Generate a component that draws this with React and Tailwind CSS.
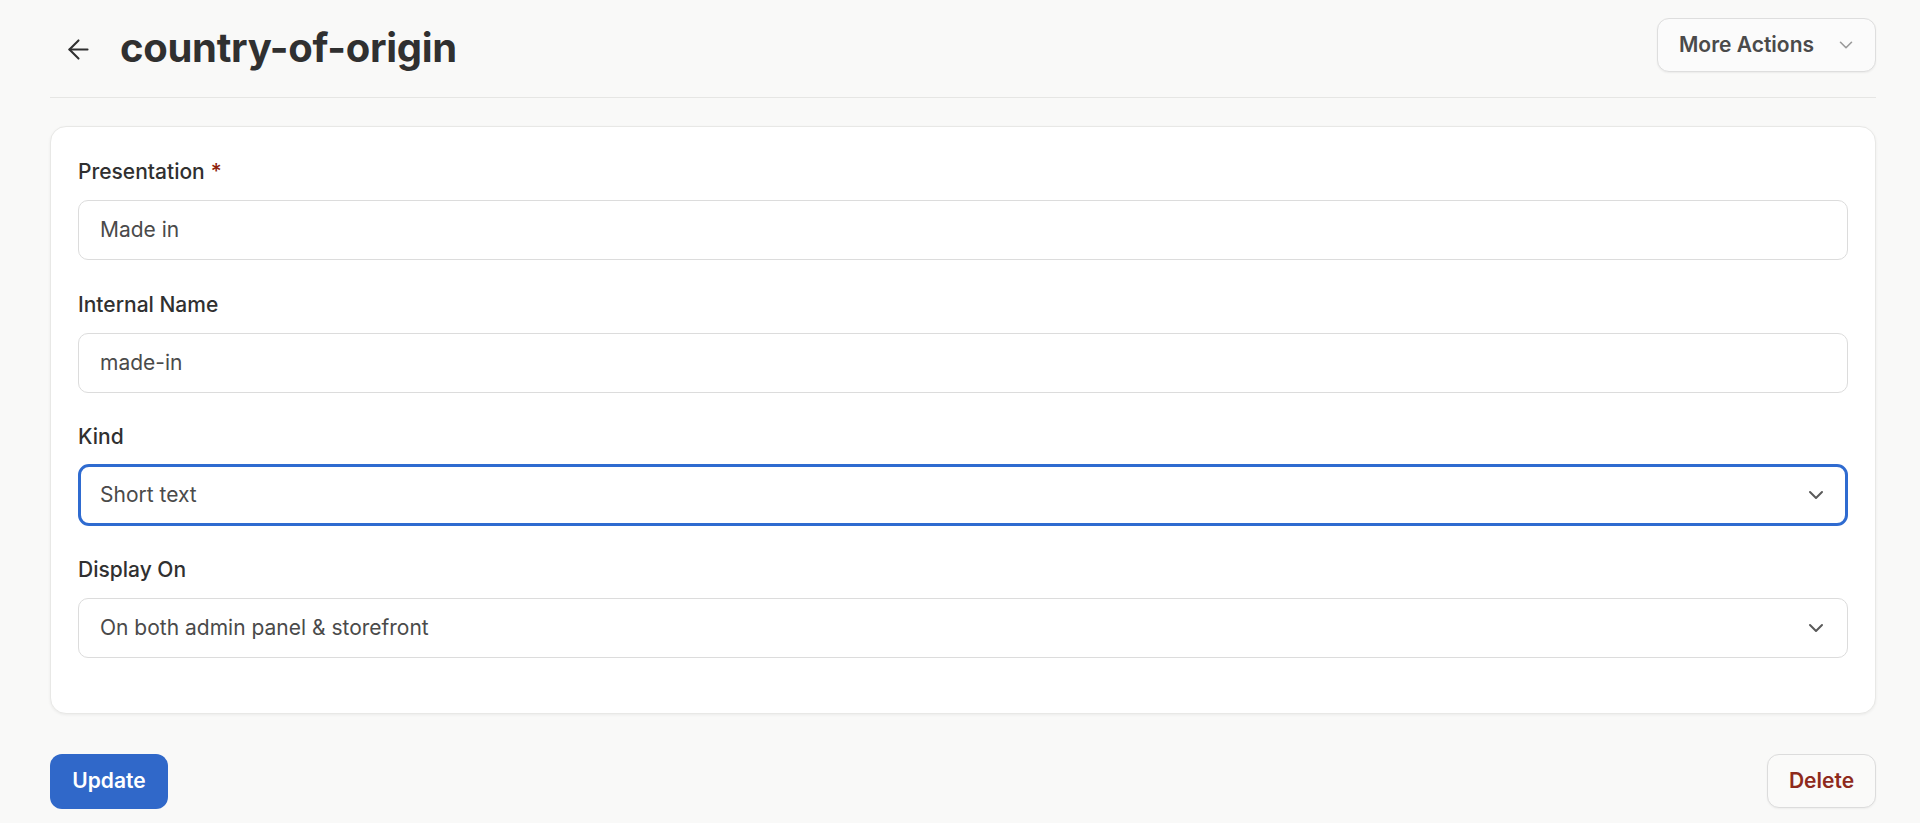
import React from "react";
import { ArrowLeft, ChevronDown } from "lucide-react";

// --- Text field ---
const Field = ({ label, required, children }) => (
  <div className="flex flex-col">
    <label className="text-[21px] leading-[26px] font-medium text-[#303030]">
      {label}
      {required && <span className="text-[#8e1f0b] ml-1.5">*</span>}
    </label>
    <div className="mt-[15px]">{children}</div>
  </div>
);

const TextInput = ({ value }) => (
  <div className="h-[60px] w-full rounded-[10px] border border-[#dcdcdc] bg-white px-[21px] flex items-center text-[21px] text-[#4a4a4a]">
    {value}
  </div>
);

const SelectInput = ({ value, focused }) => (
  <div
    className={
      focused
        ? "h-[62px] -my-px w-full rounded-[11px] border-[3px] border-[#2f6bd0] bg-white px-[19px] flex items-center justify-between text-[21px] text-[#4a4a4a]"
        : "h-[60px] w-full rounded-[10px] border border-[#dcdcdc] bg-white px-[21px] flex items-center justify-between text-[21px] text-[#4a4a4a]"
    }
  >
    <span>{value}</span>
    <ChevronDown size={24} strokeWidth={2} className="text-[#5a5a5a] mr-[-2px]" />
  </div>
);

export default function App() {
  return (
    <div
      className="min-h-screen bg-[#f9f9f8] pl-[50px] pr-[44px]"
      style={{ fontFamily: "Inter, 'Noto Sans', sans-serif" }}
    >
      {/* --- Header --- */}
      <header className="h-[98px] flex items-center justify-between border-b border-[#e6e6e4] pt-[1px]">
        <div className="flex items-center">
          <button className="ml-[12px] w-[32px] h-[32px] flex items-center justify-center text-[#303030]">
            <ArrowLeft size={31} strokeWidth={1.6} />
          </button>
          <h1 className="ml-[26px] text-[40px] font-bold text-[#303030] tracking-[-0.3px] leading-none pb-[2px]">
            country-of-origin
          </h1>
        </div>
        <button className="h-[54px] w-[219px] rounded-[12px] border border-[#dedede] bg-[#fbfbfb] shadow-[0_1px_2px_rgba(0,0,0,0.06)] flex items-center pl-[21px] pr-[18px] justify-between mb-[8px]">
          <span className="text-[21px] font-semibold text-[#4a4a4a]">More Actions</span>
          <ChevronDown size={22} strokeWidth={1.75} className="text-[#9a9a9a]" />
        </button>
      </header>

      {/* --- Form card --- */}
      <main className="pt-[28px]">
        <div className="rounded-[16px] border border-[#e8e8e6] bg-white shadow-[0_1px_3px_rgba(0,0,0,0.06)] px-[27px] pt-[32px] pb-[55px] flex flex-col gap-[31.5px]">
          <Field label="Presentation" required>
            <TextInput value="Made in" />
          </Field>
          <Field label="Internal Name">
            <TextInput value="made-in" />
          </Field>
          <Field label="Kind">
            <SelectInput value="Short text" focused />
          </Field>
          <Field label="Display On">
            <SelectInput value="On both admin panel & storefront" />
          </Field>
        </div>

        {/* --- Actions --- */}
        <div className="mt-[40px] flex items-center justify-between">
          <button className="h-[55px] w-[118px] rounded-[12px] bg-[#3068c9] text-white text-[21px] font-semibold">
            Update
          </button>
          <button className="h-[54px] w-[109px] rounded-[12px] border border-[#dcdcdc] bg-[#fafaf9] shadow-[0_1px_2px_rgba(0,0,0,0.05)] text-[#8e2a1c] text-[21px] font-semibold">
            Delete
          </button>
        </div>
      </main>
    </div>
  );
}
